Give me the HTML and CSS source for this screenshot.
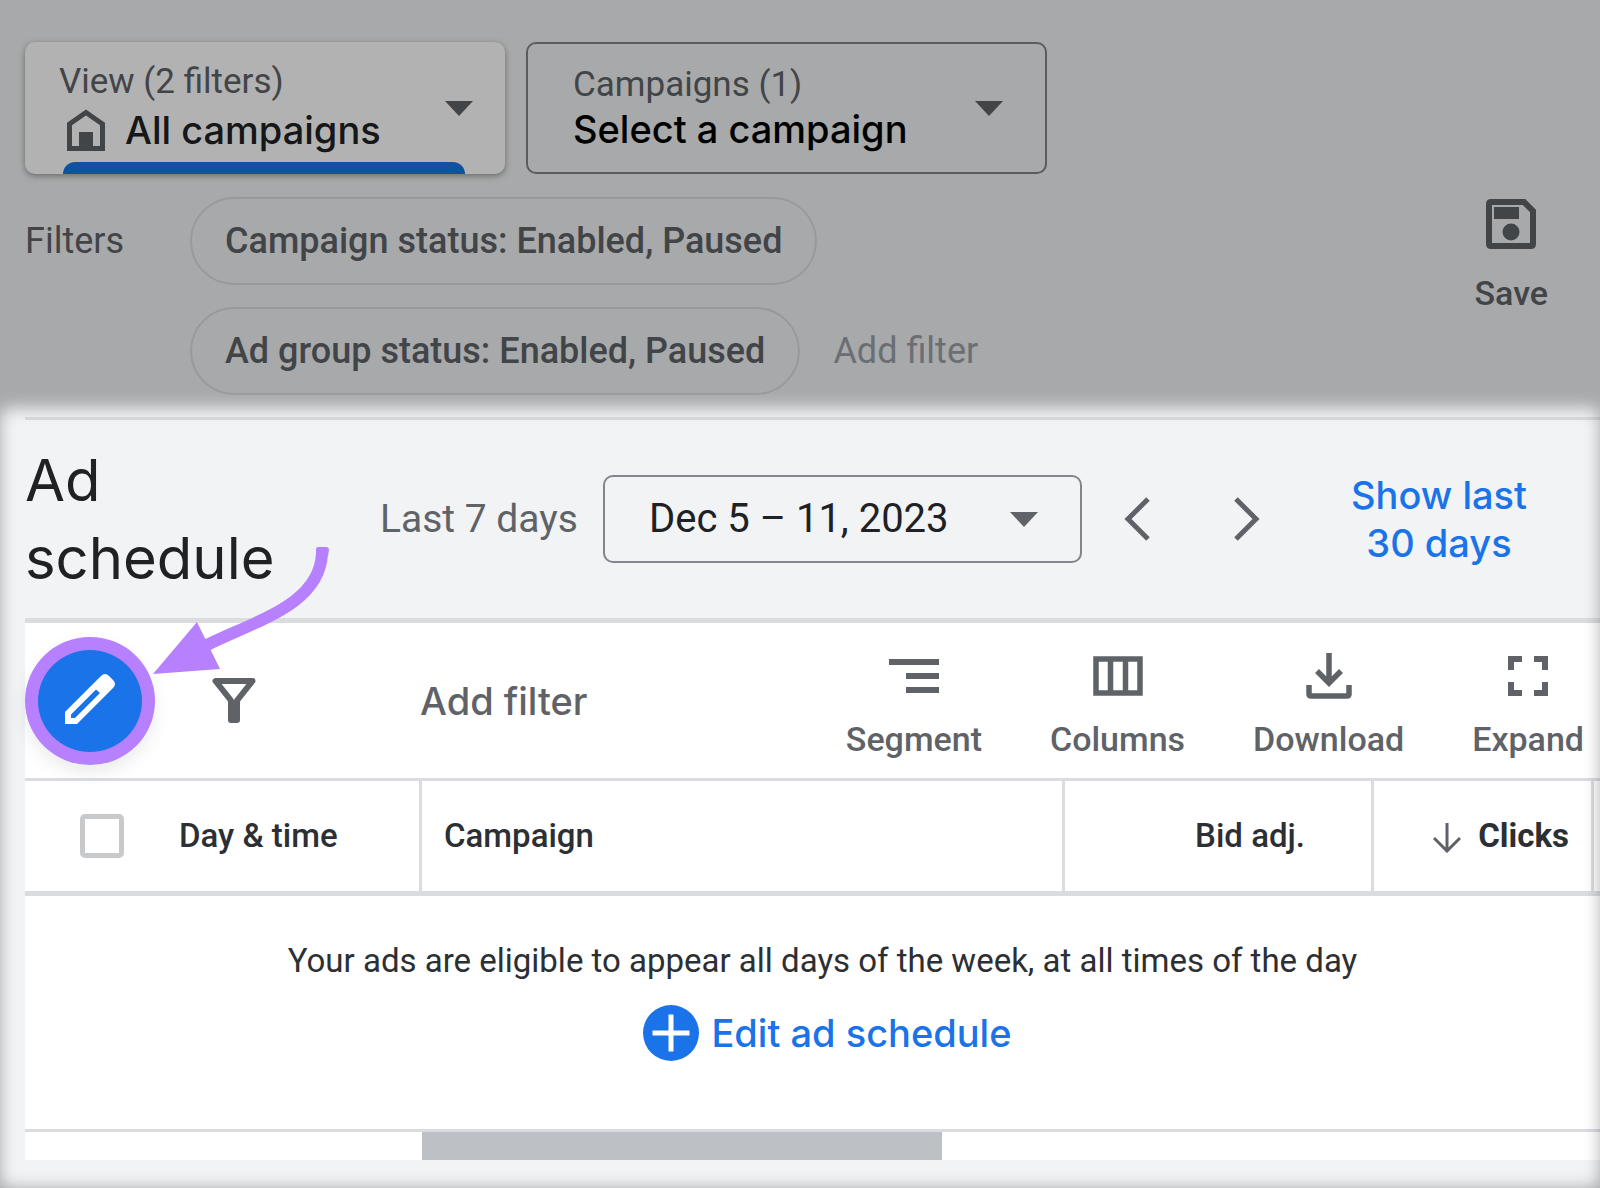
FILE: index.html
```html
<!DOCTYPE html>
<html lang="en">
<head>
    <meta charset="UTF-8">
    <title>Ad schedule</title>
    <link rel="stylesheet" href="styles.css">
</head>
<body>
    <div class="page">
        <!-- View and campaign pickers -->
        <header class="scope">
            <div class="pickers">
                <div class="picker picker-active">
                    <div class="picker-text">
                        <label for="view">View (2 filters)</label>
                        <div class="picker-value">
                            <svg class="home-icon" width="38" height="42" viewBox="0 0 38 42">
                                <path d="M2.500 39.500V15L19 3.500 35.500 15V39.500z" fill="none" stroke="currentColor" stroke-width="5"/>
                                <path d="M12 23h14v17H12z" fill="currentColor"/>
                            </svg>
                            <select id="view">
                                <option>All campaigns</option>
                            </select>
                        </div>
                    </div>
                    <svg class="caret" width="28" height="15" viewBox="0 0 28 15"><path d="M0 0h28L14 15z" fill="currentColor"/></svg>
                </div>
                <div class="picker picker-outlined">
                    <div class="picker-text">
                        <label for="campaign">Campaigns (1)</label>
                        <div class="picker-value">
                            <select id="campaign">
                                <option>Select a campaign</option>
                            </select>
                        </div>
                    </div>
                    <svg class="caret" width="28" height="15" viewBox="0 0 28 15"><path d="M0 0h28L14 15z" fill="currentColor"/></svg>
                </div>
            </div>

            <div class="filters">
                <span class="filters-label">Filters</span>
                <div class="chips">
                    <div class="chip-row">
                        <button class="chip">Campaign status: Enabled, Paused</button>
                    </div>
                    <div class="chip-row">
                        <button class="chip">Ad group status: Enabled, Paused</button>
                        <input class="chip-input" type="text" placeholder="Add filter" aria-label="Add filter">
                    </div>
                </div>
                <button class="tool save-btn">
                    <svg width="50" height="50" viewBox="0 0 50 50">
                        <path d="M5 3H38L47 12V45Q47 47 45 47H5Q3 47 3 45V5Q3 3 5 3z" fill="none" stroke="currentColor" stroke-width="6"/>
                        <path d="M8 8h25v12H8z" fill="currentColor"/>
                        <circle cx="25" cy="33" r="8.500" fill="currentColor"/>
                    </svg>
                    Save
                </button>
            </div>
        </header>

        <!-- Ad schedule panel -->
        <main class="panel">
            <div class="title-bar">
                <h1>Ad schedule</h1>
                <label class="range-label" for="range">Last 7 days</label>
                <div class="range">
                    <select id="range">
                        <option>Dec 5 – 11, 2023</option>
                    </select>
                    <svg class="caret" width="28" height="15" viewBox="0 0 28 15"><path d="M0 0h28L14 15z" fill="currentColor"/></svg>
                </div>
                <button class="step-btn" aria-label="Previous period">
                    <svg width="26" height="44" viewBox="0 0 26 44"><path d="M24 2L4 22 24 42" fill="none" stroke="currentColor" stroke-width="5"/></svg>
                </button>
                <button class="step-btn" aria-label="Next period">
                    <svg width="26" height="44" viewBox="0 0 26 44"><path d="M2 2L22 22 2 42" fill="none" stroke="currentColor" stroke-width="5"/></svg>
                </button>
                <div class="show-last">
                    <a href="#">Show last<br>30 days</a>
                </div>
            </div>

            <div class="toolbar">
                <div class="edit-wrap">
                    <button class="edit-btn" aria-label="Edit">
                        <svg width="52" height="52" viewBox="0 0 52 52">
                            <path d="M1 51V39L37 3Q41 -1 45 3L49 7Q53 11 49 15L13 51z" fill="#fff"/>
                            <path d="M7 45V41.500L32 16.500 36 20 11 45z" fill="#1a73e8"/>
                        </svg>
                    </button>
                    <svg class="arrow" width="182" height="140" viewBox="0 0 182 140">
                        <path d="M172 11C170 62 108 78 57 103" fill="none" stroke="#b780ff" stroke-width="12"/>
                        <path d="M168 5h8q3 0 3 3l-1 6h-12v-6q0-3 2-3z" fill="#b780ff"/>
                        <path d="M3 132L47 80 70 127z" fill="#b780ff"/>
                    </svg>
                </div>
                <button class="filter-btn" aria-label="Filter">
                    <svg width="44" height="45" viewBox="0 0 44 45">
                        <path d="M3.500 3H40.500L25 22.500V42H19V22.500z" fill="none" stroke="currentColor" stroke-width="6" stroke-linejoin="round"/>
                    </svg>
                </button>
                <input class="filter-input" type="text" placeholder="Add filter" aria-label="Add table filter">
                <div class="tools">
                    <button class="tool">
                        <svg width="50" height="46" viewBox="0 0 50 46"><path d="M0 9h50M17 23h33M17 37h33" stroke="currentColor" stroke-width="6"/></svg>
                        Segment
                    </button>
                    <button class="tool">
                        <svg width="50" height="46" viewBox="0 0 50 46"><path d="M3 6h44v34H3zM17.500 6v34M32.500 6v34" fill="none" stroke="currentColor" stroke-width="5.500"/></svg>
                        Columns
                    </button>
                    <button class="tool">
                        <svg width="46" height="46" viewBox="0 0 46 46">
                            <path d="M23 0v30M11 18l12 12 12-12" fill="none" stroke="currentColor" stroke-width="5.500"/>
                            <path d="M3 32v9q0 2 2 2h36q2 0 2-2v-9" fill="none" stroke="currentColor" stroke-width="5.500"/>
                        </svg>
                        Download
                    </button>
                    <button class="tool">
                        <svg width="40" height="46" viewBox="0 0 40 46"><path d="M14 6H3v11M26 6h11v11M14 40H3V29M26 40h11V29" fill="none" stroke="currentColor" stroke-width="6"/></svg>
                        Expand
                    </button>
                </div>
            </div>

            <table class="schedule">
                <colgroup>
                    <col class="col-day">
                    <col>
                    <col class="col-bid">
                    <col class="col-clicks">
                    <col class="col-more">
                </colgroup>
                <thead>
                    <tr>
                        <th>
                            <div class="day-head">
                                <input type="checkbox" id="all-rows">
                                <label for="all-rows">Day &amp; time</label>
                            </div>
                        </th>
                        <th>Campaign</th>
                        <th class="num bid">Bid adj.</th>
                        <th class="num sorted">
                            <svg width="30" height="30" viewBox="0 0 30 30"><path d="M15 0v28M2 15l13 13 13-13" fill="none" stroke="currentColor" stroke-width="3"/></svg>
                            Clicks
                        </th>
                        <th></th>
                    </tr>
                </thead>
                <tbody>
                    <tr>
                        <td class="empty" colspan="5">
                            <p>Your ads are eligible to appear all days of the week, at all times of the day</p>
                            <a class="edit-link" href="#">
                                <svg width="56" height="56" viewBox="0 0 56 56">
                                    <circle cx="28" cy="28" r="28" fill="#1a73e8"/>
                                    <path d="M28 9.500v37M9.500 28h37" stroke="#fff" stroke-width="5"/>
                                </svg>
                                Edit ad schedule
                            </a>
                        </td>
                    </tr>
                </tbody>
            </table>

            <div class="scroll-track">
                <div class="scroll-thumb"></div>
            </div>
        </main>
    </div>
</body>
</html>
```

FILE: styles.css
```css
* {
    box-sizing: border-box;
}

body {
    margin: 0;
    background-color: #f1f3f4;
    color: #202124;
    font-family: Roboto, "Liberation Sans", sans-serif;
    font-size: 34px;
    line-height: 40px;
}

.page {
    min-height: 100vh;
    display: flex;
    flex-direction: column;
    overflow: hidden;
}

button,
input,
select {
    font: inherit;
    color: inherit;
    background: none;
    border: none;
    padding: 0;
    margin: 0;
}

button {
    cursor: pointer;
}

select {
    appearance: none;
}

svg {
    display: block;
    flex-shrink: 0;
}

a {
    color: #1a73e8;
    text-decoration: none;
    font-family: Inter, Roboto, sans-serif;
    font-size: 38px;
    font-weight: 500;
    line-height: 48px;
}

.caret {
    color: #5f6368;
}

/* View and campaign pickers */
.scope {
    padding: 42px 52px 22px 25px;
}

.pickers {
    display: flex;
    gap: 21px;
}

.picker {
    height: 132px;
    display: flex;
    align-items: center;
    justify-content: space-between;
    border-radius: 10px;
}

.picker label {
    font-size: 35px;
    color: #5f6368;
}

.picker-text {
    display: flex;
    flex-direction: column;
    gap: 4px;
}

.picker-value {
    display: flex;
    align-items: center;
    gap: 20px;
    font-family: Inter, Roboto, sans-serif;
    font-size: 38px;
    font-weight: 500;
    line-height: 48px;
}

.picker-active {
    position: relative;
    width: 480px;
    padding: 0 32px 0 34px;
    background-color: #fff;
    box-shadow: 0 2px 6px rgba(60, 64, 67, 0.5);
}

/* Blue bar under the selected picker */
.picker-active::after {
    content: "";
    position: absolute;
    left: 38px;
    right: 40px;
    bottom: 0;
    height: 12px;
    border-radius: 12px 12px 0 0;
    background-color: #1a73e8;
}

.picker-outlined {
    width: 521px;
    padding: 0 42px 0 45px;
    border: 2px solid #80868b;
    color: #000;
}

.picker-outlined .picker-text {
    gap: 0;
    padding-top: 2px;
}

.home-icon {
    margin-left: 8px;
    color: #5f6368;
}

/* Filters */
.filters {
    display: flex;
    margin-top: 23px;
    font-size: 36px;
    color: #5f6368;
}

.filters-label {
    width: 165px;
    padding-top: 24px;
}

.chips {
    flex: 1;
    display: flex;
    flex-direction: column;
    gap: 22px;
}

.chip-row {
    display: flex;
    align-items: center;
    gap: 33px;
}

.chip {
    height: 88px;
    padding: 0 33px;
    border: 2px solid #dadce0;
    border-radius: 44px;
    font-weight: 500;
}

.chip-input {
    width: 240px;
}

.chip-input::placeholder {
    color: #9aa0a6;
    opacity: 1;
}

.tool {
    display: flex;
    flex-direction: column;
    align-items: center;
    gap: 20px;
    font-size: 34px;
    font-weight: 500;
    color: #5f6368;
}

.save-btn {
    align-self: flex-start;
    margin-top: 2px;
    gap: 24px;
}

/* Panel, with everything around it dimmed */
.panel {
    position: relative;
    flex: 1;
    padding-left: 25px;
    padding-bottom: 28px;
}

.panel::after {
    content: "";
    position: absolute;
    top: -509px;
    right: -500px;
    bottom: -500px;
    left: -500px;
    border: 500px solid rgba(0, 0, 0, 0.3);
    border-radius: 510px;
    filter: blur(8px);
    pointer-events: none;
}

.title-bar {
    height: 206px;
    display: flex;
    align-items: center;
    padding-right: 24px;
    border-top: 3px solid #dadce0;
    border-bottom: 5px solid #dadce0;
}

h1 {
    width: 355px;
    padding-right: 80px;
    margin: 0;
    font-family: Inter, Roboto, sans-serif;
    font-size: 58px;
    font-weight: 400;
    line-height: 78px;
}

.range-label {
    width: 223px;
    font-size: 39px;
    color: #5f6368;
}

.range {
    width: 479px;
    height: 88px;
    display: flex;
    align-items: center;
    justify-content: space-between;
    padding: 0 42px 0 44px;
    border: 2px solid #80868b;
    border-radius: 10px;
    font-size: 40px;
}

.step-btn {
    width: 110px;
    height: 88px;
    display: flex;
    align-items: center;
    justify-content: center;
    color: #5f6368;
}

.show-last {
    flex: 1;
    text-align: center;
}

.show-last a {
    display: block;
}

/* Table toolbar */
.toolbar {
    height: 155px;
    display: flex;
    align-items: center;
    padding-right: 16px;
    background-color: #fff;
}

.edit-wrap {
    position: relative;
}

.edit-btn {
    width: 130px;
    height: 128px;
    display: flex;
    align-items: center;
    justify-content: center;
    padding-bottom: 4px;
    border: 13px solid #b780ff;
    border-radius: 50%;
    background-color: #1a73e8;
    box-shadow: 0 8px 16px rgba(60, 64, 67, 0.1);
}

.arrow {
    position: absolute;
    left: 125px;
    top: -95px;
    pointer-events: none;
}

.filter-btn {
    width: 158px;
    height: 88px;
    display: flex;
    align-items: center;
    justify-content: center;
    color: #5f6368;
}

.filter-input {
    flex: 1;
    min-width: 0;
    margin-left: 107px;
    font-family: Inter, Roboto, sans-serif;
    font-size: 38px;
    font-weight: 500;
}

.filter-input::placeholder {
    color: #5f6368;
    opacity: 1;
}

.tools {
    display: flex;
    gap: 68px;
    padding-top: 10px;
}

/* Schedule table */
.schedule {
    width: 100%;
    table-layout: fixed;
    border-collapse: separate;
    border-spacing: 0;
    background-color: #fff;
    color: #2c2f33;
    font-size: 33px;
}

.col-day {
    width: 397px;
}

.col-bid {
    width: 309px;
}

.col-clicks {
    width: 220px;
}

.col-more {
    width: 6px;
}

.schedule th {
    height: 118px;
    padding: 0 22px;
    border-top: 3px solid #dadce0;
    border-right: 3px solid #dadce0;
    border-bottom: 5px solid #dadce0;
    font-weight: 500;
    text-align: left;
}

.schedule th:last-child {
    padding: 0;
    border-right: none;
}

.schedule th.num {
    text-align: right;
}

.schedule th.bid {
    padding-right: 66px;
}

.schedule th.sorted {
    font-weight: 700;
}

.sorted svg {
    display: inline-block;
    margin-right: 8px;
    vertical-align: -6px;
    color: #5f6368;
}

.day-head {
    display: flex;
    align-items: center;
    gap: 55px;
    padding-left: 33px;
}

.day-head input {
    appearance: none;
    width: 44px;
    height: 44px;
    border: 5px solid #c8c9cb;
    border-radius: 5px;
}

.schedule td.empty {
    height: 233px;
    padding: 45px 0 0 20px;
    vertical-align: top;
    text-align: center;
}

.empty p {
    margin: 0 0 24px;
}

.edit-link {
    display: inline-flex;
    align-items: center;
    gap: 12px;
    padding-left: 10px;
}

.scroll-track {
    border-top: 3px solid #dadce0;
    background-color: #fff;
}

.scroll-thumb {
    width: 33%;
    height: 28px;
    margin-left: 397px;
    background-color: #bdc1c6;
}
```
